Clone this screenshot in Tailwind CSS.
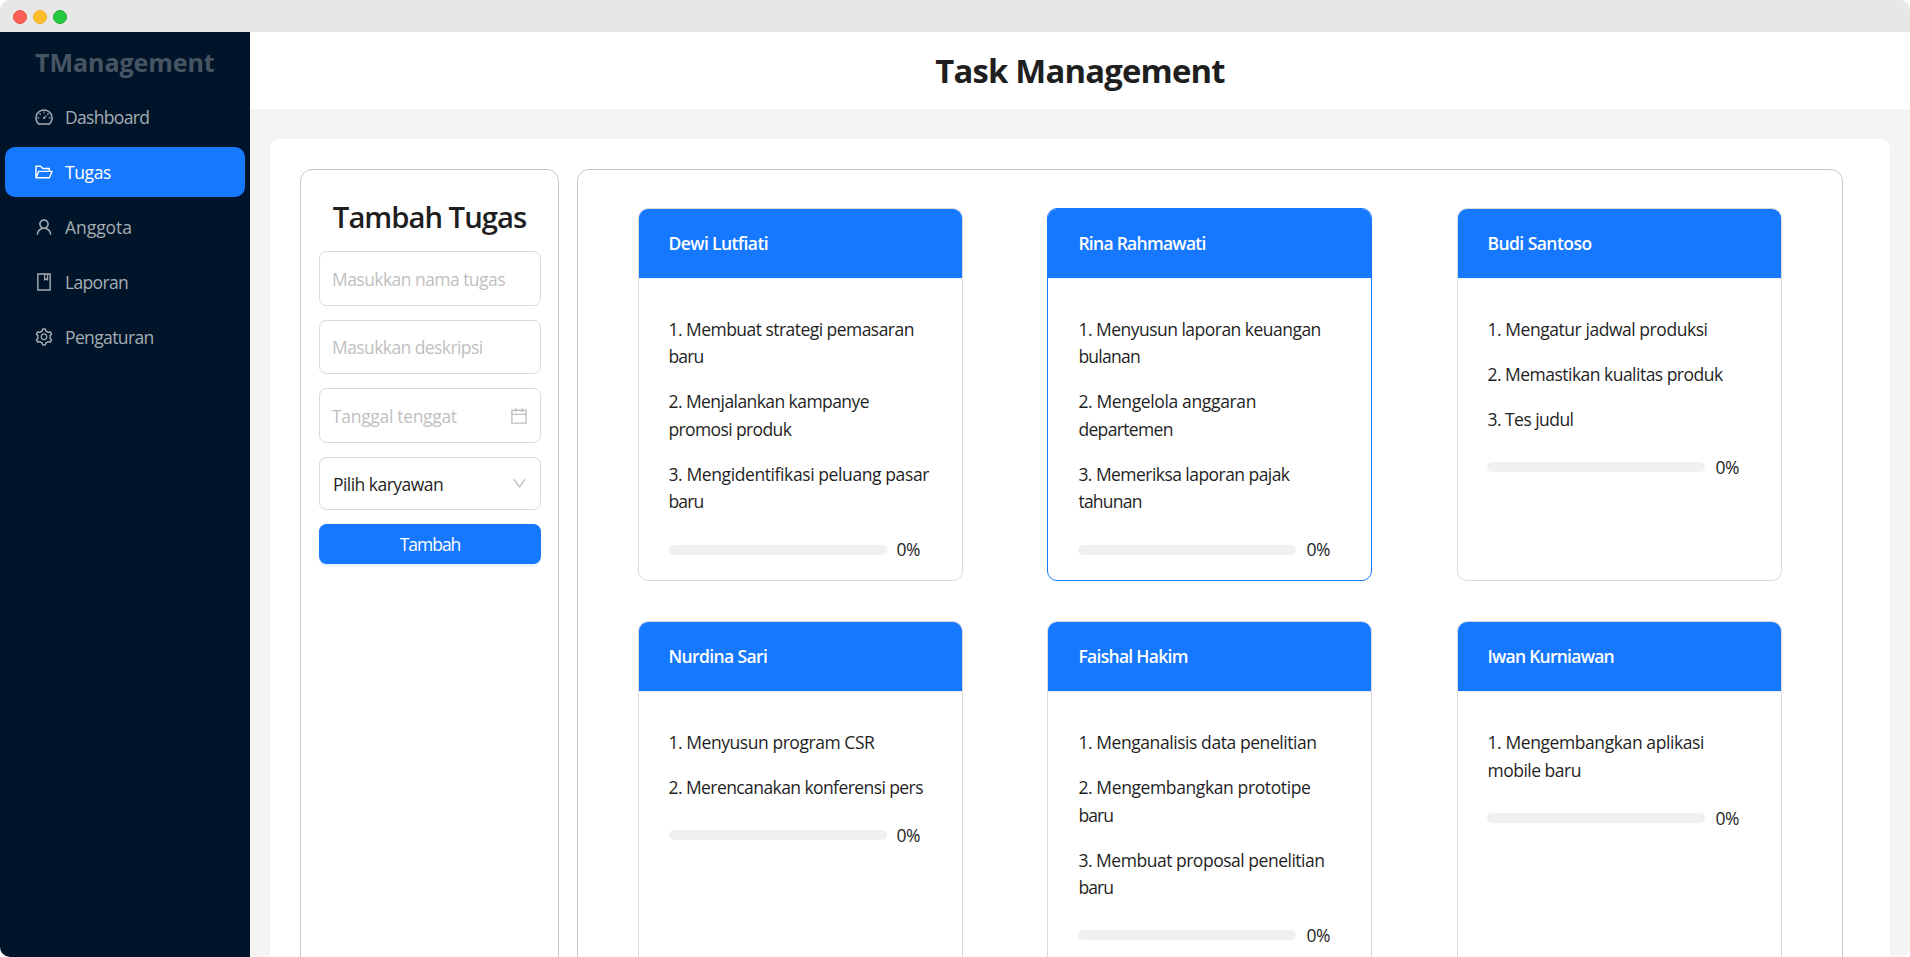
<!DOCTYPE html>
<html lang="id">
<head>
<meta charset="utf-8">
<title>Task Management</title>
<script src="https://cdn.jsdelivr.net/npm/@tailwindcss/browser@4"></script>
</head>
<body class="bg-white">
<div class="h-[957px] w-[1910px] overflow-hidden rounded-[10px] bg-[#f4f4f4] font-['Open_Sans',sans-serif] text-[17.5px] leading-[27.5px] tracking-[-0.5px] text-[#1f1f1f]">
  <!-- Window title bar -->
  <div class="flex h-8 items-center gap-[6px] bg-[#e7e7e7] pt-[2px] pl-[13px]">
    <span class="size-[14px] rounded-full border border-[#e9524a] bg-[#ff5f57]"></span>
    <span class="size-[14px] rounded-full border border-[#f1ae1b] bg-[#febc2e]"></span>
    <span class="size-[14px] rounded-full border border-[#1eac2c] bg-[#28c840]"></span>
  </div>
  <div class="flex h-[925px]">
    <!-- Sidebar -->
    <aside class="w-[250px] shrink-0 bg-[#001529] px-[5px] text-[#a6adb4]">
      <div class="flex h-[60px] items-center pt-[2px] pl-[30px] text-[25px] font-bold tracking-[-0.05px] text-[#475461]">TManagement</div>
      <nav class="flex flex-col gap-[5px]">
        <a class="flex h-[50px] items-center gap-[11.25px] rounded-[10px] pl-[28.75px]">
          <svg class="size-5 fill-current" viewBox="0 0 1024 1024"><path d="M924.8 385.6a446.7 446.7 0 00-96-142.4 446.7 446.7 0 00-142.4-96C631.1 123.8 572.5 112 512 112s-119.1 11.8-174.4 35.2a446.7 446.7 0 00-142.4 96 446.7 446.7 0 00-96 142.4C75.8 440.9 64 499.5 64 560c0 132.7 58.3 257.7 159.9 343.1l1.7 1.4c5.8 4.8 13.1 7.5 20.6 7.5h531.7c7.5 0 14.8-2.7 20.6-7.5l1.7-1.4C901.7 817.7 960 692.7 960 560c0-60.5-11.9-119.1-35.2-174.4zM761.4 836H262.6A371.12 371.12 0 01140 560c0-99.4 38.7-192.8 109-263 70.3-70.3 163.7-109 263-109 99.4 0 192.8 38.7 263 109 70.3 70.3 109 163.7 109 263 0 105.6-44.5 205.5-122.6 276zM623.5 421.5a8.03 8.03 0 00-11.3 0L527.7 506c-18.7-5-39.4-.2-54.1 14.5a55.95 55.95 0 000 79.2 55.95 55.95 0 0079.2 0 55.87 55.87 0 0014.5-54.1l84.5-84.5c3.1-3.1 3.1-8.2 0-11.3l-28.3-28.3zM490 320h44c4.4 0 8-3.6 8-8v-80c0-4.4-3.6-8-8-8h-44c-4.4 0-8 3.6-8 8v80c0 4.4 3.6 8 8 8zm260 218v44c0 4.4 3.6 8 8 8h80c4.4 0 8-3.6 8-8v-44c0-4.4-3.6-8-8-8h-80c-4.4 0-8 3.6-8 8zm12.7-197.2l-31.1-31.1a8.03 8.03 0 00-11.3 0l-56.6 56.6a8.03 8.03 0 000 11.3l31.1 31.1c3.1 3.1 8.2 3.1 11.3 0l56.6-56.6c3.1-3.1 3.1-8.2 0-11.3zm-458.6-31.1a8.03 8.03 0 00-11.3 0l-31.1 31.1a8.03 8.03 0 000 11.3l56.6 56.6c3.1 3.1 8.2 3.1 11.3 0l31.1-31.1c3.1-3.1 3.1-8.2 0-11.3l-56.6-56.6zM262 530h-80c-4.4 0-8 3.6-8 8v44c0 4.4 3.6 8 8 8h80c4.4 0 8-3.6 8-8v-44c0-4.4-3.6-8-8-8z"/></svg>
          <span class="pt-[2px] tracking-[-0.68px]">Dashboard</span>
        </a>
        <a class="flex h-[50px] items-center gap-[11.25px] rounded-[10px] bg-[#1677ff] pl-[28.75px] text-white">
          <svg class="size-5 fill-current" viewBox="0 0 1024 1024"><path d="M928 444H820V330.4c0-17.7-14.3-32-32-32H473L355.7 186.2a8.15 8.15 0 00-5.5-2.2H96c-17.7 0-32 14.3-32 32v592c0 17.7 14.3 32 32 32h698c13 0 24.8-7.9 29.7-20l134-332c1.5-3.8 2.3-7.9 2.3-12 0-17.7-14.3-32-32-32zM136 256h188.5l119.6 114.4H748V444H238c-13 0-24.8 7.9-29.7 20L136 643.2V256zm635.3 512H159l103.3-256h612.4L771.3 768z"/></svg>
          <span class="pt-[2px] tracking-[-0.4px]">Tugas</span>
        </a>
        <a class="flex h-[50px] items-center gap-[11.25px] rounded-[10px] pl-[28.75px]">
          <svg class="size-5 fill-current" viewBox="0 0 1024 1024"><path d="M858.5 763.6a374 374 0 00-80.6-119.5 375.63 375.63 0 00-119.5-80.6c-.4-.2-.8-.3-1.2-.5C719.5 518 760 444.7 760 362c0-137-111-248-248-248S264 225 264 362c0 82.7 40.5 156 102.8 201.1-.4.2-.8.3-1.2.5-44.8 18.9-85 46-119.5 80.6a375.63 375.63 0 00-80.6 119.5A371.7 371.7 0 00136 901.8a8 8 0 008 8.2h60c4.4 0 7.9-3.5 8-7.8 2-77.2 33-149.5 87.8-204.3 56.7-56.7 132-87.9 212.2-87.9s155.5 31.2 212.2 87.9C779 752.7 810 825 812 902.2c.1 4.4 3.6 7.8 8 7.8h60a8 8 0 008-8.2c-1-47.8-10.9-94.3-29.5-138.2zM512 534c-45.9 0-89.1-17.9-121.6-50.4S340 407.9 340 362c0-45.9 17.9-89.1 50.4-121.6S466.1 190 512 190s89.1 17.9 121.6 50.4S684 316.1 684 362c0 45.9-17.9 89.1-50.4 121.6S557.9 534 512 534z"/></svg>
          <span class="pt-[2px] tracking-[-0.05px]">Anggota</span>
        </a>
        <a class="flex h-[50px] items-center gap-[11.25px] rounded-[10px] pl-[28.75px]">
          <svg class="size-5 fill-current" viewBox="0 0 1024 1024"><path d="M832 64H192c-17.7 0-32 14.3-32 32v832c0 17.7 14.3 32 32 32h640c17.7 0 32-14.3 32-32V96c0-17.7-14.3-32-32-32zm-260 72h96v209.9L621.5 312 572 347.4V136zm220 752H232V136h280v296.9c0 3.3 1 6.6 3 9.3a15.9 15.9 0 0022.3 3.7l83.8-59.9 81.4 59.4c2.7 2 6 3.1 9.4 3.1 8.8 0 16-7.2 16-16V136h64v752z"/></svg>
          <span class="pt-[2px] tracking-[-0.65px]">Laporan</span>
        </a>
        <a class="flex h-[50px] items-center gap-[11.25px] rounded-[10px] pl-[28.75px]">
          <svg class="size-5 fill-current" viewBox="0 0 1024 1024"><path d="M924.8 625.7l-65.5-56c3.1-19 4.7-38.4 4.7-57.8s-1.6-38.8-4.7-57.8l65.5-56a32.03 32.03 0 009.3-35.2l-.9-2.6a443.74 443.74 0 00-79.7-137.9l-1.8-2.1a32.12 32.12 0 00-35.1-9.5l-81.3 28.9c-30-24.6-63.5-44-99.7-57.6l-15.7-85a32.05 32.05 0 00-25.8-25.7l-2.7-.5c-52.1-9.4-106.9-9.4-159 0l-2.7.5a32.05 32.05 0 00-25.8 25.7l-15.8 85.4a351.86 351.86 0 00-99 57.4l-81.9-29.1a32 32 0 00-35.1 9.5l-1.8 2.1a446.02 446.02 0 00-79.7 137.9l-.9 2.6c-4.5 12.5-.8 26.5 9.3 35.2l66.3 56.6c-3.1 18.8-4.6 38-4.6 57.1 0 19.2 1.5 38.4 4.6 57.1L99 625.5a32.03 32.03 0 00-9.3 35.2l.9 2.6c18.1 50.4 44.9 96.9 79.7 137.9l1.8 2.1a32.12 32.12 0 0035.1 9.5l81.9-29.1c29.8 24.5 63.1 43.9 99 57.4l15.8 85.4a32.05 32.05 0 0025.8 25.7l2.7.5a449.4 449.4 0 00159 0l2.7-.5a32.05 32.05 0 0025.8-25.7l15.7-85a350 350 0 0099.7-57.6l81.3 28.9a32 32 0 0035.1-9.5l1.8-2.1c34.8-41.1 61.6-87.5 79.7-137.9l.9-2.6c4.5-12.3.8-26.3-9.3-35zM788.3 465.9c2.5 15.1 3.8 30.6 3.8 46.1s-1.3 31-3.8 46.1l-6.6 40.1 74.7 63.9a370.03 370.03 0 01-42.6 73.6L721 702.8l-31.4 25.8c-23.9 19.6-50.5 35-79.3 45.8l-38.1 14.3-17.9 97a377.5 377.5 0 01-85 0l-17.9-97.2-37.8-14.5c-28.5-10.8-55-26.2-78.7-45.7l-31.4-25.9-93.4 33.2c-17-22.9-31.2-47.6-42.6-73.6l75.5-64.5-6.5-40c-2.4-14.9-3.7-30.3-3.7-45.5 0-15.3 1.2-30.6 3.7-45.5l6.5-40-75.5-64.5c11.3-26.1 25.6-50.7 42.6-73.6l93.4 33.2 31.4-25.9c23.7-19.5 50.2-34.9 78.7-45.7l37.9-14.3 17.9-97.2c28.1-3.2 56.8-3.2 85 0l17.9 97 38.1 14.3c28.7 10.8 55.4 26.2 79.3 45.8l31.4 25.8 92.8-32.9c17 22.9 31.2 47.6 42.6 73.6L781.8 426l6.5 39.9zM512 326c-97.2 0-176 78.8-176 176s78.8 176 176 176 176-78.8 176-176-78.8-176-176-176zm79.2 255.2A111.6 111.6 0 01512 614c-29.9 0-58-11.7-79.2-32.8A111.6 111.6 0 01400 502c0-29.9 11.7-58 32.8-79.2C454 401.6 482.1 390 512 390c29.9 0 58 11.6 79.2 32.8A111.6 111.6 0 01624 502c0 29.9-11.7 58-32.8 79.2z"/></svg>
          <span class="pt-[2px] tracking-[-0.62px]">Pengaturan</span>
        </a>
      </nav>
    </aside>
    <div class="flex grow flex-col">
      <header class="flex h-[77px] shrink-0 items-center justify-center bg-white">
        <h1 class="pt-px text-[32.8px] font-bold tracking-[-0.78px]">Task Management</h1>
      </header>
      <main class="mx-5 mt-[30px] flex h-[900px] items-start gap-[18px] rounded-[10px] bg-white pt-[30px] pl-[30px]">
        <!-- New task form -->
        <section class="h-[900px] w-[259px] shrink-0 rounded-[12px] border border-[#c8c8c8] px-[18px] pt-[28px]">
          <h2 class="mb-[14px] text-center text-[29.25px] leading-[39px] font-semibold tracking-[-1px]">Tambah Tugas</h2>
          <div class="flex w-[222px] flex-col gap-[14px]">
            <div class="flex h-[54.7px] items-center rounded-[7.5px] border border-[#d9d9d9] pt-[2px] pl-[12px] tracking-[-0.55px] text-[#bfbfbf]">Masukkan nama tugas</div>
            <div class="flex h-[54.7px] items-center rounded-[7.5px] border border-[#d9d9d9] pt-px pl-[12px] tracking-[-0.58px] text-[#bfbfbf]">Masukkan deskripsi</div>
            <div class="flex h-[54.7px] items-center justify-between rounded-[7.5px] border border-[#d9d9d9] pr-[11px] pl-[12px] text-[#bfbfbf]">
              <span class="pt-[2px] tracking-[-0.32px]">Tanggal tenggat</span>
              <svg class="size-5 fill-current" viewBox="0 0 1024 1024"><path d="M880 184H712v-64c0-4.4-3.6-8-8-8h-56c-4.4 0-8 3.6-8 8v64H384v-64c0-4.4-3.6-8-8-8h-56c-4.4 0-8 3.6-8 8v64H144c-17.7 0-32 14.3-32 32v664c0 17.7 14.3 32 32 32h736c17.7 0 32-14.3 32-32V216c0-17.7-14.3-32-32-32zm-40 656H184V460h656v380zM184 392V256h128v48c0 4.4 3.6 8 8 8h56c4.4 0 8-3.6 8-8v-48h256v48c0 4.4 3.6 8 8 8h56c4.4 0 8-3.6 8-8v-48h128v136H184z"/></svg>
            </div>
            <div class="flex h-[52.9px] items-center justify-between rounded-[7.5px] border border-[#d9d9d9] pr-[12px] pl-[13px]">
              <span class="pt-[2px] tracking-[-0.54px]">Pilih karyawan</span>
              <svg class="size-[17px] fill-[#bfbfbf]" viewBox="0 0 1024 1024"><path d="M884 256h-75c-5.1 0-9.9 2.5-12.9 6.6L512 654.2 227.9 262.6c-3-4.1-7.8-6.6-12.9-6.6h-75c-6.5 0-10.3 7.4-6.5 12.7l352.6 486.1c12.8 17.6 39 17.6 51.7 0l352.6-486.1c3.9-5.3.1-12.7-6.4-12.7z"/></svg>
            </div>
            <button class="h-[40px] rounded-[7.5px] bg-[#1677ff] pt-px tracking-[-1px] text-white shadow-[0_2.5px_0_rgba(5,145,255,0.1)]">Tambah</button>
          </div>
        </section>
        <!-- Task cards, one per employee -->
        <section class="grid h-[1200px] w-[1266px] shrink-0 auto-rows-[373px] grid-cols-[325px_325px_325px] content-start gap-x-[84.4px] gap-y-[40px] rounded-[12px] border border-[#c8c8c8] pt-[38px] pl-[60px]">
          <article class="overflow-hidden rounded-[10px] border border-[#d9d9d9]">
            <h3 class="flex h-[69px] items-center bg-[#1677ff] pl-[29.5px] font-semibold tracking-[-0.6px] text-white">Dewi Lutfiati</h3>
            <div class="flex flex-col gap-[17.5px] border-t border-[#f0f0f0] pt-[36.8px] pl-[29.5px]">
              <p><span class="tracking-[-0.54px]">1. Membuat strategi pemasaran</span><br><span class="tracking-[-0.9px]">baru</span></p>
              <p><span class="tracking-[-0.57px]">2. Menjalankan kampanye</span><br><span class="tracking-[-0.62px]">promosi produk</span></p>
              <p><span class="tracking-[-0.4px]">3. Mengidentifikasi peluang pasar</span><br><span class="tracking-[-0.9px]">baru</span></p>
              <div class="flex items-center gap-[10px] pt-[2px]"><span class="h-[10px] w-[218px] rounded-full bg-[#f0f0f0]"></span><span class="pt-px">0%</span></div>
            </div>
          </article>
          <article class="overflow-hidden rounded-[10px] border border-[#1677ff]">
            <h3 class="flex h-[69px] items-center bg-[#1677ff] pl-[30px] font-semibold tracking-[-0.72px] text-white">Rina Rahmawati</h3>
            <div class="flex flex-col gap-[17.5px] border-t border-[#f0f0f0] pt-[36.8px] pl-[30px]">
              <p><span class="tracking-[-0.52px]">1. Menyusun laporan keuangan</span><br><span class="tracking-[-0.75px]">bulanan</span></p>
              <p><span class="tracking-[-0.36px]">2. Mengelola anggaran</span><br><span class="tracking-[-0.65px]">departemen</span></p>
              <p><span class="tracking-[-0.55px]">3. Memeriksa laporan pajak</span><br><span class="tracking-[-0.75px]">tahunan</span></p>
              <div class="flex items-center gap-[10px] pt-[2px]"><span class="h-[10px] w-[218px] rounded-full bg-[#f0f0f0]"></span><span class="pt-px">0%</span></div>
            </div>
          </article>
          <article class="overflow-hidden rounded-[10px] border border-[#d9d9d9]">
            <h3 class="flex h-[69px] items-center bg-[#1677ff] pl-[29.7px] font-semibold tracking-[-0.55px] text-white">Budi Santoso</h3>
            <div class="flex flex-col gap-[17.5px] border-t border-[#f0f0f0] pt-[36.8px] pl-[29.7px]">
              <p class="tracking-[-0.45px]">1. Mengatur jadwal produksi</p>
              <p class="tracking-[-0.52px]">2. Memastikan kualitas produk</p>
              <p class="tracking-[-0.54px]">3. Tes judul</p>
              <div class="flex items-center gap-[10px] pt-[2px]"><span class="h-[10px] w-[218px] rounded-full bg-[#f0f0f0]"></span><span class="pt-px">0%</span></div>
            </div>
          </article>
          <article class="overflow-hidden rounded-[10px] border border-[#d9d9d9]">
            <h3 class="flex h-[69px] items-center bg-[#1677ff] pt-px pl-[29.5px] font-semibold tracking-[-0.62px] text-white">Nurdina Sari</h3>
            <div class="flex flex-col gap-[17.5px] border-t border-[#f0f0f0] pt-[37px] pl-[29.5px]">
              <p class="tracking-[-0.45px]">1. Menyusun program CSR</p>
              <p class="tracking-[-0.58px]">2. Merencanakan konferensi pers</p>
              <div class="flex items-center gap-[10px] pt-[2px]"><span class="h-[10px] w-[218px] rounded-full bg-[#f0f0f0]"></span><span class="pt-px">0%</span></div>
            </div>
          </article>
          <article class="overflow-hidden rounded-[10px] border border-[#d9d9d9]">
            <h3 class="flex h-[69px] items-center bg-[#1677ff] pt-px pl-[30px] font-semibold tracking-[-0.7px] text-white">Faishal Hakim</h3>
            <div class="flex flex-col gap-[17.5px] border-t border-[#f0f0f0] pt-[37px] pl-[30px]">
              <p class="tracking-[-0.43px]">1. Menganalisis data penelitian</p>
              <p><span class="tracking-[-0.39px]">2. Mengembangkan prototipe</span><br><span class="tracking-[-0.9px]">baru</span></p>
              <p><span class="tracking-[-0.48px]">3. Membuat proposal penelitian</span><br><span class="tracking-[-0.9px]">baru</span></p>
              <div class="flex items-center gap-[10px] pt-[2px]"><span class="h-[10px] w-[218px] rounded-full bg-[#f0f0f0]"></span><span class="pt-px">0%</span></div>
            </div>
          </article>
          <article class="overflow-hidden rounded-[10px] border border-[#d9d9d9]">
            <h3 class="flex h-[69px] items-center bg-[#1677ff] pt-px pl-[29.7px] font-semibold tracking-[-0.75px] text-white">Iwan Kurniawan</h3>
            <div class="flex flex-col gap-[17.5px] border-t border-[#f0f0f0] pt-[37px] pl-[29.7px]">
              <p><span class="tracking-[-0.41px]">1. Mengembangkan aplikasi</span><br><span class="tracking-[-0.5px]">mobile baru</span></p>
              <div class="flex items-center gap-[10px] pt-[2px]"><span class="h-[10px] w-[218px] rounded-full bg-[#f0f0f0]"></span><span class="pt-px">0%</span></div>
            </div>
          </article>
        </section>
      </main>
    </div>
  </div>
</div>
</body>
</html>
